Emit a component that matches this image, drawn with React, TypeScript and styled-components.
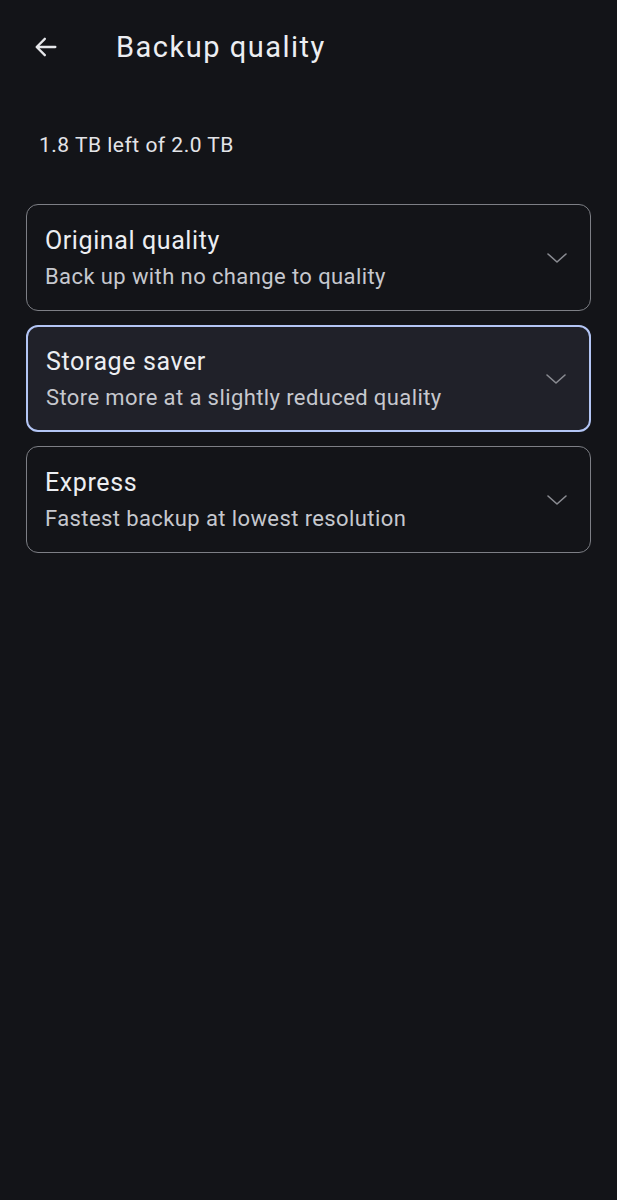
import styled, { createGlobalStyle } from "styled-components";

const GlobalStyle = createGlobalStyle`
  html, body {
    margin: 0;
    padding: 0;
    background: #131418;
  }
  body {
    font-family: Roboto, "Noto Sans", sans-serif;
  }
`;

const options = [
  { title: "Original quality", subtitle: "Back up with no change to quality" },
  { title: "Storage saver", subtitle: "Store more at a slightly reduced quality", selected: true },
  { title: "Express", subtitle: "Fastest backup at lowest resolution" },
];

function BackArrow() {
  return (
    <svg width="28" height="28" viewBox="0 0 24 24" fill="none">
      <path
        d="M20 12H4.5M11 5l-7 7 7 7"
        stroke="#e6e7ea"
        strokeWidth="2"
        strokeLinecap="round"
        strokeLinejoin="round"
      />
    </svg>
  );
}

function Chevron() {
  return (
    <svg width="22" height="14" viewBox="0 0 22 14" fill="none">
      <path
        d="M2 3l9 8 9-8"
        stroke="#8a8c92"
        strokeWidth="1.6"
        strokeLinecap="round"
        strokeLinejoin="round"
      />
    </svg>
  );
}

export default function App() {
  return (
    <>
      <GlobalStyle />
      <Page>
        <TopBar>
          <IconButton>
            <BackArrow />
          </IconButton>
          <Title>Backup quality</Title>
        </TopBar>
        <StorageText>1.8 TB left of 2.0 TB</StorageText>
        <OptionList>
          {options.map((o) => (
            <OptionCard key={o.title} $selected={!!o.selected}>
              <OptionText>
                <OptionTitle>{o.title}</OptionTitle>
                <OptionSubtitle>{o.subtitle}</OptionSubtitle>
              </OptionText>
              <Chevron />
            </OptionCard>
          ))}
        </OptionList>
      </Page>
    </>
  );
}

const Page = styled.div({
  width: 617,
  height: 1200,
  background: "#131418",
  color: "#e6e7ea",
  boxSizing: "border-box",
});

const TopBar = styled.div({
  display: "flex",
  alignItems: "center",
  height: 94,
  paddingLeft: 32,
  gap: 56,
});

const IconButton = styled.div({
  display: "flex",
  alignItems: "center",
  justifyContent: "center",
  width: 28,
  height: 28,
});

const Title = styled.div({
  fontSize: 29,
  fontWeight: 400,
  color: "#eceef2",
  letterSpacing: 1.5,
});

const StorageText = styled.div({
  padding: "37px 39px 0",
  fontSize: 21,
  color: "#e3e4e8",
  lineHeight: "28px",
  letterSpacing: 0.5,
});

const OptionList = styled.div({
  display: "flex",
  flexDirection: "column",
  gap: 14,
  padding: "45px 26px 0",
});

const OptionCard = styled.div<{ $selected: boolean }>((p) => ({
  display: "flex",
  alignItems: "center",
  justifyContent: "space-between",
  boxSizing: "border-box",
  height: 107,
  padding: "0 22px 0 18px",
  borderRadius: 12,
  border: p.$selected ? "2.5px solid #b3c5f4" : "1.5px solid #7d7f85",
  background: p.$selected ? "#202129" : "#131418",
}));

const OptionText = styled.div({
  display: "flex",
  flexDirection: "column",
  gap: 7,
  paddingTop: 1,
});

const OptionTitle = styled.div({
  fontSize: 25,
  lineHeight: "30px",
  color: "#eceef2",
  letterSpacing: 0.6,
});

const OptionSubtitle = styled.div({
  fontSize: 22,
  lineHeight: "28px",
  color: "#c6c8ce",
  letterSpacing: 0.4,
});
